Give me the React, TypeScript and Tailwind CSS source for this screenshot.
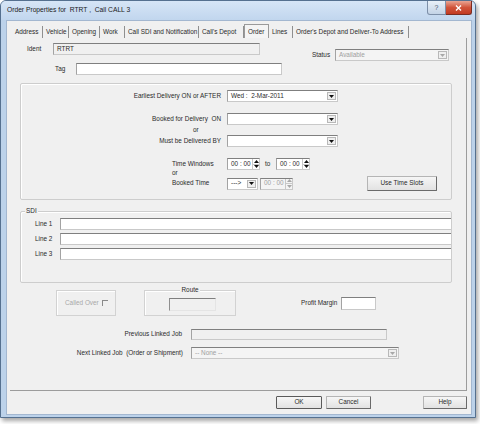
import React from 'react'

const field = 'border border-[#c9c9c9] border-t-[#7f7f7f] border-l-[#a3a3a3]'

function Tri({ up, dim }: { up?: boolean; dim?: boolean }) {
  return (
    <svg width="5" height="3" viewBox="0 0 5 3">
      <path d={up ? 'M0 3h5L2.5 0z' : 'M0 0h5L2.5 3z'} fill={dim ? '#a8a8a8' : '#111'} />
    </svg>
  )
}

function Combo({ className, text, disabled }: { className: string; text?: string; disabled?: boolean }) {
  return (
    <div className={`flex h-[12px] ${field} ${disabled ? 'bg-[#f4f4f4]' : 'bg-white'} ${className}`}>
      <span className={`flex-1 flex items-center pl-[3px] whitespace-pre ${disabled ? 'text-[#a0a0a0]' : ''}`}>{text}</span>
      <span className="w-[9px] m-px flex items-center justify-center border border-[#b8b8b8] bg-[#efefef]">
        <Tri dim={disabled} />
      </span>
    </div>
  )
}

function Spin({ className, disabled }: { className: string; disabled?: boolean }) {
  return (
    <div className={`flex h-[12px] ${field} ${disabled ? 'bg-[#f4f4f4] text-[#a0a0a0]' : 'bg-white'} ${className}`}>
      <span className="flex-1 flex items-center pl-[3px] whitespace-pre">00 : 00</span>
      <span className="w-[7px] flex flex-col border-l border-[#c8c8c8]">
        <span className="flex-1 flex items-center justify-center border-b border-[#c8c8c8]"><Tri up dim={disabled} /></span>
        <span className="flex-1 flex items-center justify-center"><Tri dim={disabled} /></span>
      </span>
    </div>
  )
}

function Button({ className, children, primary }: { className: string; children: React.ReactNode; primary?: boolean }) {
  return (
    <div
      className={`flex items-center justify-center rounded-[1px] border bg-gradient-to-b from-[#f6f6f6] to-[#e2e2e2] ${
        primary ? 'border-[#5a5a5a]' : 'border-[#b5b5b5] border-r-[#6a6a6a] border-b-[#6a6a6a]'
      } ${className}`}
    >
      {children}
    </div>
  )
}

const tabs: [string, string][] = [
  ['Address', 'w-[31px]'],
  ['Vehicle', 'w-[26px]'],
  ['Opening', 'w-[31px]'],
  ['Work', 'w-[25px]'],
  ['Call SDI and Notification', 'w-[74px]'],
  ["Call's Depot", 'w-[45px]'],
  ['Order', 'w-[25px]'],
  ['Lines', 'w-[24px]'],
  ["Order's Depot and Deliver-To Address", 'w-[116px]'],
]

export default function App() {
  return (
    <div className="w-[480px] h-[424px] bg-white overflow-hidden font-['Liberation_Sans',Arial,sans-serif] text-[6.4px] leading-none text-[#2a2a2a]">
      <div className="w-[476px] h-[418px] flex flex-col rounded-t-[6px] border border-[#55708f] bg-[#bcd2ea] shadow-[2px_3px_4px_rgba(0,0,0,0.35)]">
        {/* Title bar */}
        <div className="h-[19px] flex justify-between rounded-t-[5px] bg-gradient-to-b from-[#d6e5f6] to-[#c1d6ee]">
          <span className="pl-[6px] flex items-center whitespace-pre text-[6.7px] text-[#1a1a1a]">Order Properties for  RTRT ,  Call CALL 3</span>
          <div className="flex self-start pr-[3px]">
            <div className="w-[19px] h-[14px] flex items-center justify-center rounded-bl-[3px] border border-t-0 border-[#7d8fa8] bg-gradient-to-b from-[#e9f0f8] to-[#c3d3e6] text-[7px] text-[#4a5a70]">?</div>
            <div className="w-[26px] h-[14px] flex items-center justify-center rounded-br-[3px] border border-t-0 border-l-0 border-[#7a2d22] bg-gradient-to-b from-[#e8a493] via-[#d0533a] to-[#c23a22]">
              <svg width="7" height="6" viewBox="0 0 7 6">
                <path d="M1 0.5l5 5M6 0.5l-5 5" stroke="#fff" strokeWidth="1.4" />
              </svg>
            </div>
          </div>
        </div>

        {/* Client area */}
        <div className="ml-[5px] w-[466px] h-[395px] flex flex-col border border-[#a3b7d0] bg-[#f0f0f0]">
          {/* Tabs */}
          <div className="mt-[3px] ml-[5px] h-[14px] flex items-end">
            {tabs.map(([t, w]) =>
              t === 'Order' ? (
                <div key={t} className={`${w} h-[14px] pl-[3px] pt-[4px] whitespace-nowrap border-t border-x border-[#9a9a9a] bg-[#f4f4f4]`}>
                  {t}
                </div>
              ) : (
                <div key={t} className={`${w} h-[12px] pl-[3px] pt-[3px] whitespace-nowrap border-r border-[#8f8f8f]`}>
                  {t}
                </div>
              )
            )}
          </div>

          {/* Tab panel */}
          <div className="ml-[3px] w-[457px] h-[353px] flex flex-col border-r border-b border-[#9c9c9c]">
            {/* Ident / Tag / Status */}
            <div className="flex">
              <div className="w-[272px] flex flex-col">
                <div className="mt-[5px] h-[12px] flex items-center">
                  <span className="ml-[17px] w-[26px]">Ident</span>
                  <div className={`w-[207px] h-full flex items-center pl-[3px] bg-[#f0f0f0] ${field}`}>RTRT</div>
                </div>
                <div className="mt-[8px] h-[12px] flex items-center">
                  <span className="ml-[45px] w-[21px]">Tag</span>
                  <div className={`w-[206px] h-full bg-white ${field}`} />
                </div>
              </div>
              <div className="ml-[30px] mt-[11px] h-[12px] flex items-center">
                <span className="w-[23px]">Status</span>
                <Combo className="w-[114px]" text="Available" disabled />
              </div>
            </div>

            {/* Delivery dates group */}
            <div className="mt-[8px] ml-[10px] w-[432px] h-[117px] flex flex-col rounded-[2px] border border-[#cdcdcd] shadow-[inset_1px_1px_0_#fff]">
              <div className="mt-[6px] h-[12px] flex items-center">
                <span className="w-[200px] text-right">Earliest Delivery ON or AFTER</span>
                <Combo className="ml-[6px] w-[111px]" text="Wed :  2-Mar-2011" />
              </div>
              <div className="mt-[11px] h-[12px] flex items-center">
                <span className="w-[200px] text-right whitespace-pre">Booked for Delivery  ON</span>
                <Combo className="ml-[6px] w-[111px]" />
              </div>
              <div className="h-[10px] flex items-center">
                <span className="ml-[172px]">or</span>
              </div>
              <div className="h-[12px] flex items-center">
                <span className="w-[200px] text-right">Must be Delivered BY</span>
                <Combo className="ml-[6px] w-[111px]" />
              </div>
              <div className="mt-[11px] h-[12px] flex items-center">
                <span className="ml-[151px] w-[55px]">Time Windows</span>
                <Spin className="w-[33px]" />
                <span className="w-[16px] pl-[5px]">to</span>
                <Spin className="w-[34px]" />
              </div>
              <div className="h-[6px] flex items-center">
                <span className="ml-[151px]">or</span>
              </div>
              <div className="h-[15px] flex items-center">
                <span className="ml-[151px] w-[55px]">Booked Time</span>
                <Combo className="w-[31px]" text="--->" />
                <Spin className="ml-[2px] w-[33px]" disabled />
                <Button className="ml-[74px] w-[70px] h-[15px]">Use Time Slots</Button>
              </div>
            </div>

            {/* SDI group */}
            <div className="relative mt-[11px] ml-[10px] w-[432px] h-[72px] flex flex-col rounded-[2px] border border-[#cdcdcd] shadow-[inset_1px_1px_0_#fff]">
              <span className="absolute left-[4px] top-[-4px] px-px bg-[#f0f0f0]">SDI</span>
              {['Line 1', 'Line 2', 'Line 3'].map((l, i) => (
                <div key={l} className={`${i === 0 ? 'mt-[6px]' : 'mt-[3px]'} h-[12px] flex items-center`}>
                  <span className="ml-[14px] w-[25px]">{l}</span>
                  <div className={`flex-1 h-full bg-white ${field} border-r-0`} />
                </div>
              ))}
            </div>

            {/* Called over / Route / Profit margin */}
            <div className="mt-[7px] flex items-start">
              <div className="ml-[46px] w-[60px] h-[26px] flex items-center border border-[#d2d2d2] shadow-[inset_1px_1px_0_#fff]">
                <span className="pl-[8px] text-[#a8a8a8]">Called Over</span>
                <span className="ml-[3px] w-[6px] h-[6px] border-t border-l border-[#8a8a8a]" />
              </div>
              <div className="relative ml-[28px] w-[92px] h-[26px] border border-[#d2d2d2] shadow-[inset_1px_1px_0_#fff]">
                <span className="absolute left-0 right-0 top-[-4px] flex justify-center">
                  <span className="px-px bg-[#f0f0f0]">Route</span>
                </span>
                <div className="ml-[24px] mt-[7px] w-[47px] h-[13px] border border-[#e4e4e4] border-t-[#7f7f7f] border-l-[#8f8f8f]" />
              </div>
              <div className="ml-[65px] mt-[7px] h-[13px] flex items-center">
                <span className="w-[40px]">Profit Margin</span>
                <div className={`w-[35px] h-full bg-white ${field}`} />
              </div>
            </div>

            {/* Linked jobs */}
            <div className="mt-[13px] h-[11px] flex items-center">
              <span className="w-[172px] text-right">Previous Linked Job</span>
              <div className={`ml-[9px] w-[196px] h-full bg-[#f0f0f0] ${field}`} />
            </div>
            <div className="mt-[7px] h-[12px] flex items-center">
              <span className="w-[173px] text-right whitespace-pre">Next Linked Job  (Order or Shipment)</span>
              <Combo className="ml-[8px] w-[208px]" text="-- None --" disabled />
            </div>
          </div>

          {/* Dialog buttons */}
          <div className="mt-[5px] h-[13px] flex">
            <Button className="ml-[269px] w-[46px] h-full" primary>OK</Button>
            <Button className="ml-[4px] w-[45px] h-full">Cancel</Button>
            <Button className="ml-[52px] w-[44px] h-full">Help</Button>
          </div>
        </div>
      </div>
    </div>
  )
}
